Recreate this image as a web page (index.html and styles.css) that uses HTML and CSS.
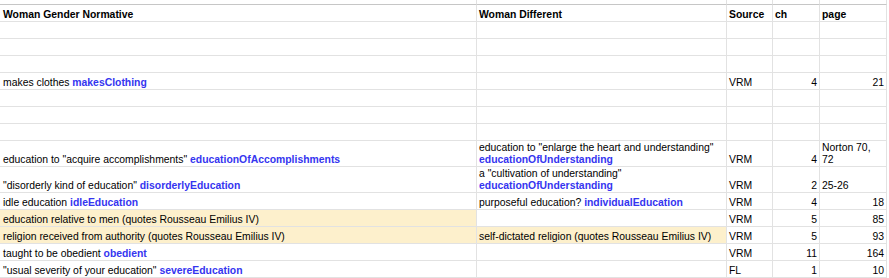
FILE: index.html
```html
<!DOCTYPE html>
<html lang="en">
<head>
    <meta charset="UTF-8">
    <title>Woman Gender Normative</title>
    <link rel="stylesheet" href="styles.css">
</head>
<body>
    <table class="sheet">
        <tr class="spacer">
            <td class="c1"></td><td class="c2"></td><td class="c3"></td><td class="c4"></td><td class="c5"></td>
        </tr>
        <tr class="head">
            <th>Woman Gender Normative</th>
            <th>Woman Different</th>
            <th>Source</th>
            <th>ch</th>
            <th>page</th>
        </tr>
        <tr><td></td><td></td><td></td><td></td><td></td></tr>
        <tr><td></td><td></td><td></td><td></td><td></td></tr>
        <tr><td></td><td></td><td></td><td></td><td></td></tr>
        <tr>
            <td>makes clothes <span class="tag">makesClothing</span></td>
            <td></td>
            <td>VRM</td>
            <td class="num">4</td>
            <td class="num">21</td>
        </tr>
        <tr><td></td><td></td><td></td><td></td><td></td></tr>
        <tr><td></td><td></td><td></td><td></td><td></td></tr>
        <tr><td></td><td></td><td></td><td></td><td></td></tr>
        <tr class="tall">
            <td>education to "acquire accomplishments" <span class="tag">educationOfAccomplishments</span></td>
            <td>education to "enlarge the heart and understanding"<br><span class="tag">educationOfUnderstanding</span></td>
            <td>VRM</td>
            <td class="num">4</td>
            <td>Norton 70,<br>72</td>
        </tr>
        <tr class="tall">
            <td>"disorderly kind of education" <span class="tag">disorderlyEducation</span></td>
            <td>a "cultivation of understanding"<br><span class="tag">educationOfUnderstanding</span></td>
            <td>VRM</td>
            <td class="num">2</td>
            <td>25-26</td>
        </tr>
        <tr>
            <td>idle education <span class="tag">idleEducation</span></td>
            <td>purposeful education? <span class="tag">individualEducation</span></td>
            <td>VRM</td>
            <td class="num">4</td>
            <td class="num">18</td>
        </tr>
        <tr>
            <td class="hl">education relative to men (quotes Rousseau Emilius IV)</td>
            <td></td>
            <td>VRM</td>
            <td class="num">5</td>
            <td class="num">85</td>
        </tr>
        <tr>
            <td class="hl">religion received from authority (quotes Rousseau Emilius IV)</td>
            <td class="hl">self-dictated religion (quotes Rousseau Emilius IV)</td>
            <td>VRM</td>
            <td class="num">5</td>
            <td class="num">93</td>
        </tr>
        <tr>
            <td>taught to be obedient <span class="tag">obedient</span></td>
            <td></td>
            <td>VRM</td>
            <td class="num">11</td>
            <td class="num">164</td>
        </tr>
        <tr>
            <td>"usual severity of your education" <span class="tag">severeEducation</span></td>
            <td></td>
            <td>FL</td>
            <td class="num">1</td>
            <td class="num">10</td>
        </tr>
    </table>
</body>
</html>
```

FILE: styles.css
```css
body {
    margin: 0;
    background: #fff;
    font-family: 'Liberation Sans', Arial, sans-serif;
    font-size: 10.4px;
    color: #000;
}

.sheet {
    border-collapse: separate;
    border-spacing: 0;
    table-layout: fixed;
    width: 887px;
}

.sheet td, .sheet th {
    box-sizing: border-box;
    padding: 0 2px 0 2px;
    border-right: 1px solid #e2e2e2;
    border-bottom: 1px solid #e2e2e2;
    vertical-align: bottom;
    text-align: left;
    line-height: 12px;
    white-space: nowrap;
    overflow: hidden;
}

.sheet td:first-child, .sheet th:first-child {
    padding-left: 3px;
}

.sheet tr {
    height: 17px;
}

.sheet tr.tall {
    height: 26px;
}

.spacer td {
    height: 5px;
    border-bottom-color: #c6c6c6;
}

.spacer .c1 { width: 477px; }
.spacer .c2 { width: 250px; }
.spacer .c3 { width: 46px; }
.spacer .c4 { width: 47px; }
.spacer .c5 { width: 67px; }

.sheet tr.spacer {
    height: 5px;
}

.head th {
    font-weight: bold;
}

.num {
    text-align: right !important;
}

.tag {
    color: #3535f0;
    font-weight: bold;
}

.hl {
    background: #fdf0cc;
}
```
